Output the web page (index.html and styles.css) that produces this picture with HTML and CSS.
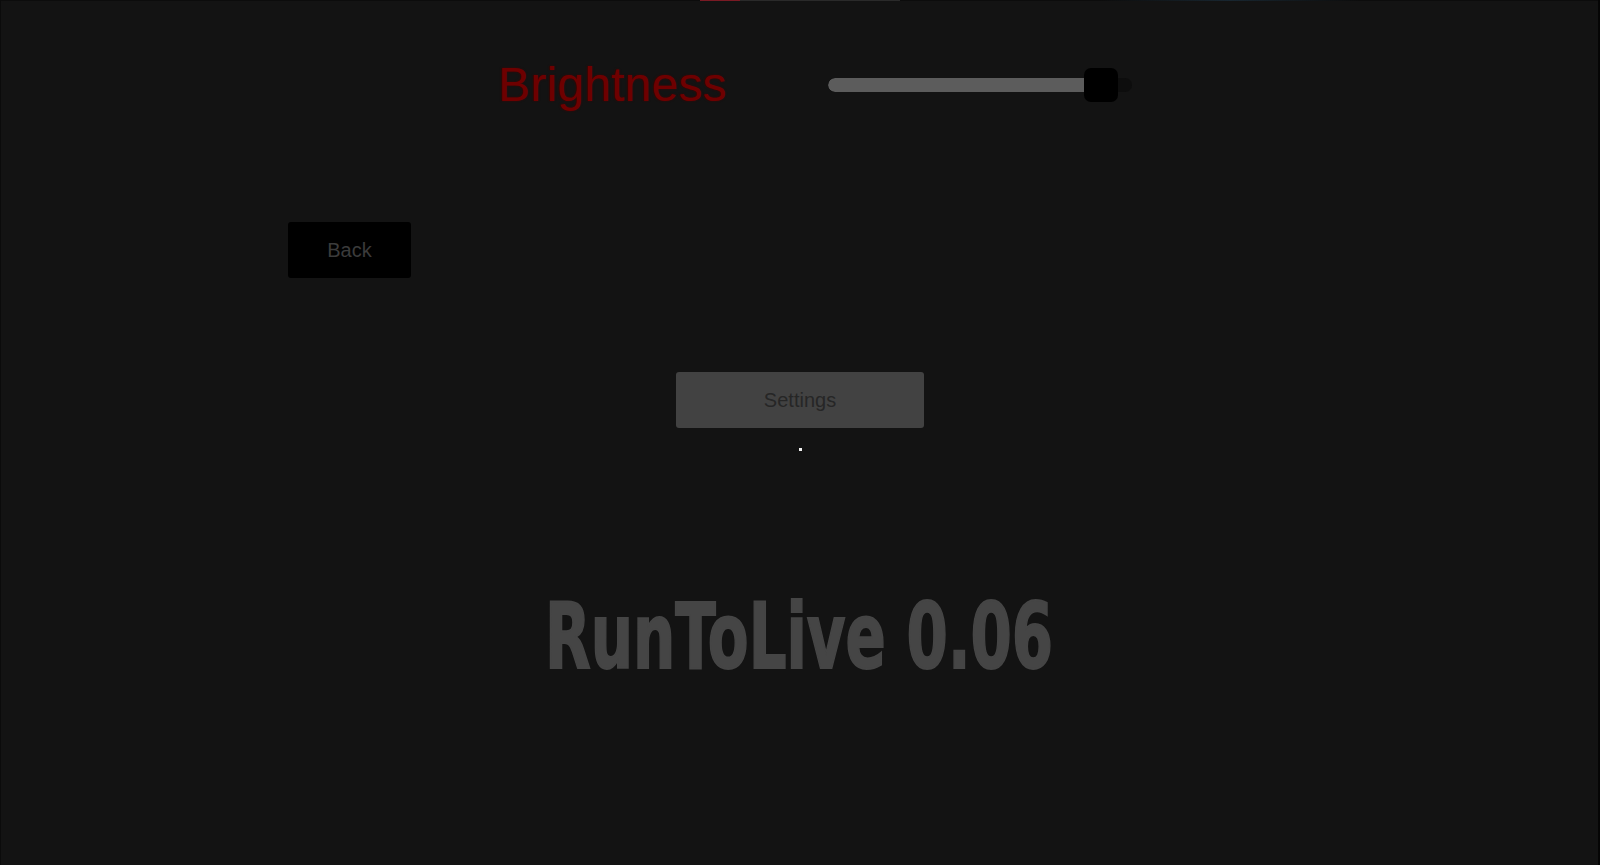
FILE: index.html
```html
<!DOCTYPE html>
<html>
<head>
<meta charset="utf-8">
<link rel="stylesheet" href="styles.css">
</head>
<body>
<div class="screen">
  <div class="topline">
    <span class="seg-red"></span>
    <span class="seg-gray"></span>
    <span class="seg-blue"></span>
  </div>
  <div class="bright-row">
    <div class="bright-label">Brightness</div>
    <div class="slider">
      <div class="track">
        <div class="fill"></div>
      </div>
      <div class="handle"></div>
    </div>
  </div>
  <div class="back-row">
    <button class="btn-back">Back</button>
  </div>
  <div class="settings-row">
    <button class="btn-settings">Settings</button>
  </div>
  <div class="dot"></div>
  <div class="title-row">
    <span class="title">RunToLive 0.06</span>
  </div>
</div>
</body>
</html>
```
FILE: styles.css
```css
html, body {
  margin: 0;
  padding: 0;
  width: 1600px;
  height: 865px;
  overflow: hidden;
  background: #131313;
}
.screen {
  box-sizing: border-box;
  width: 1600px;
  height: 865px;
  background: #131313;
  border-left: 1px solid #0b0b0b;
  border-right: 2px solid #050505;
  display: flex;
  flex-direction: column;
  font-family: "Liberation Sans", Arial, sans-serif;
}
.topline {
  height: 1px;
  background: #0c0c0c;
  display: flex;
  padding-left: 699px;
}
.seg-red { width: 40px; background: #7a1a24; }
.seg-gray { width: 160px; background: #2a2a2a; }
.seg-blue {
  width: 260px;
  margin-left: 200px;
  background: linear-gradient(90deg, #0c0c0c, #182630, #0c0c0c);
}
.bright-row {
  margin-top: 56px;
  height: 56px;
  display: flex;
  align-items: center;
  padding-left: 497px;
}
.bright-label {
  width: 330px;
  font-size: 48px;
  line-height: 56px;
  color: #6e0000;
  text-shadow: 0 0 2px #4a0000;
  letter-spacing: 0.2px;
}
.slider {
  position: relative;
  width: 304px;
  height: 34px;
  display: flex;
  align-items: center;
}
.track {
  width: 304px;
  height: 14px;
  border-radius: 7px;
  background: #0d0d0d;
  overflow: hidden;
}
.fill {
  width: 272px;
  height: 14px;
  border-radius: 7px;
  background: #5c5c5c;
}
.handle {
  position: absolute;
  left: 256px;
  top: 0;
  width: 34px;
  height: 34px;
  border-radius: 7px;
  background: #000;
}
.back-row {
  margin-top: 109px;
  padding-left: 287px;
  display: flex;
}
.btn-back {
  width: 123px;
  height: 56px;
  border: none;
  border-radius: 3px;
  background: #000;
  color: #3b3b3b;
  font-family: "Liberation Sans", Arial, sans-serif;
  font-size: 20px;
  padding: 0;
}
.settings-row {
  margin-top: 94px;
  display: flex;
  padding-left: 675px;
}
.btn-settings {
  width: 248px;
  height: 56px;
  border: none;
  border-radius: 3px;
  background: #424242;
  color: #262626;
  font-family: "Liberation Sans", Arial, sans-serif;
  font-size: 20px;
  padding: 0;
}
.dot {
  margin-top: 20px;
  margin-left: 798px;
  width: 3px;
  height: 3px;
  background: #f2f2f2;
}
.title-row {
  margin-top: 136px;
  display: flex;
  justify-content: center;
}
.title {
  display: inline-block;
  font-family: "DejaVu Sans", sans-serif;
  font-weight: bold;
  font-size: 90px;
  line-height: 100px;
  color: #454545;
  -webkit-text-stroke: 2px #454545;
  white-space: nowrap;
  transform: scaleX(0.66);
}
```
